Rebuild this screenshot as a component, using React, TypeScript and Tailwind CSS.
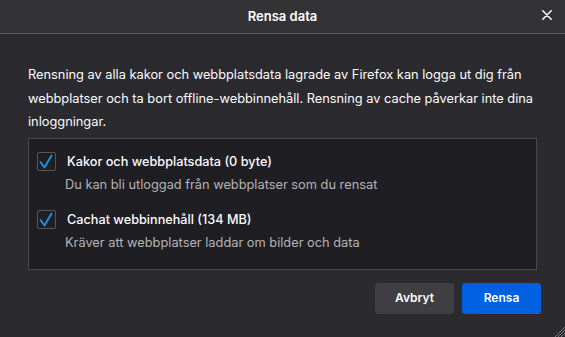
import React from "react";

function Check() {
  return (
    <div className="w-[19px] h-[19px] shrink-0 rounded-[2px] border border-[#55555a] bg-[#1f1e22] flex items-center justify-center">
      <svg width="17" height="17" viewBox="0 0 17 17" fill="none">
        <path d="M2.5 9 L6.5 14.5 L13.5 2.5" stroke="#1c8fe3" strokeWidth="2" strokeLinecap="round" strokeLinejoin="round" />
      </svg>
    </div>
  );
}

function Item({ label, desc }: { label: string; desc: string }) {
  return (
    <div className="flex flex-col">
      <div className="flex items-center h-[20px]">
        <Check />
        <span className="ml-[11px] text-[12.7px] leading-[20px] font-medium text-[#fbfbfe]">{label}</span>
      </div>
      <div className="mt-[4px] ml-[28px] text-[12.8px] leading-[18px] text-[#b4b4b8]">{desc}</div>
    </div>
  );
}

export default function App() {
  return (
    <div
      className="relative w-[565px] h-[337px] overflow-hidden bg-[#2b2a2e] flex flex-col"
      style={{ fontFamily: 'Inter, "Liberation Sans", Arial, sans-serif' }}
    >
      <div className="relative h-[34px] shrink-0 bg-[#333336] border-b border-[#58585c] flex items-center justify-center">
        <span className="text-[13px] font-semibold text-white">Rensa data</span>
        <svg className="absolute right-[13px] top-[10px]" width="10" height="10" viewBox="0 0 10 10">
          <path d="M0.8 0.8 L9.2 9.2 M9.2 0.8 L0.8 9.2" stroke="#f4f4f5" strokeWidth="1.6" strokeLinecap="round" />
        </svg>
      </div>
      <div className="flex flex-col px-[28px] pt-[29px]">
        <p className="text-[12.8px] leading-[23.5px] text-[#fbfbfe] whitespace-nowrap">
          Rensning av alla kakor och webbplatsdata lagrade av Firefox kan logga ut dig från
          <br />
          webbplatser och ta bort offline-webbinnehåll. Rensning av cache påverkar inte dina
          <br />
          inloggningar.
        </p>
        <div className="mt-[4px] h-[132px] border border-[#4a494e] bg-[#1f1e22] pt-[13px] pl-[8px] flex flex-col gap-[16px]">
          <Item label="Kakor och webbplatsdata (0 byte)" desc="Du kan bli utloggad från webbplatser som du rensat" />
          <Item label="Cachat webbinnehåll (134 MB)" desc="Kräver att webbplatser laddar om bilder och data" />
        </div>
        <div className="mt-[13px] mr-[-4px] flex justify-end gap-[8px]">
          <button className="w-[79px] h-[31px] rounded-[3px] bg-[#3f3e43] text-[12px] font-semibold text-[#fbfbfe]">Avbryt</button>
          <button className="w-[79px] h-[31px] rounded-[3px] bg-[#0060df] text-[12px] font-semibold text-white">Rensa</button>
        </div>
      </div>
      <svg className="absolute right-0 bottom-0" width="12" height="12" viewBox="0 0 12 12">
        <path d="M12 2 L2 12 M12 5 L5 12 M12 8 L8 12" stroke="#7a7a7e" strokeWidth="1" />
      </svg>
    </div>
  );
}
